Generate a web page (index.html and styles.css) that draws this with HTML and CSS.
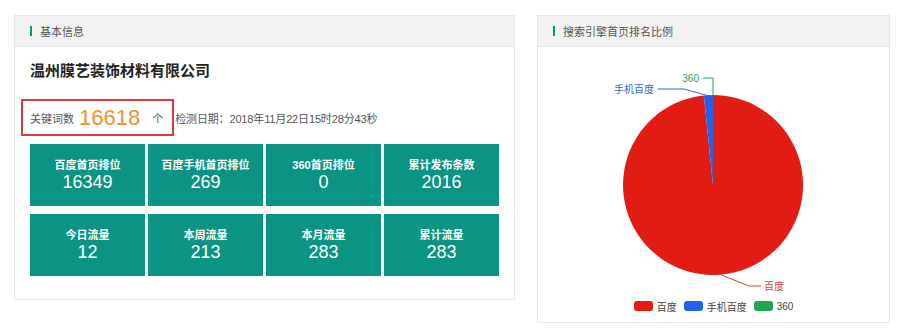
FILE: index.html
```html
<!DOCTYPE html>
<html lang="zh-CN">
<head>
  <meta charset="UTF-8">
  <title>基本信息</title>
  <link rel="stylesheet" href="styles.css">
</head>
<body>
<div class="page">

  <!-- 基本信息 -->
  <div class="panel panel-info">
    <div class="panel-head"><span class="bar"></span>基本信息</div>
    <div class="info-body">
      <h2 class="company">温州膜艺装饰材料有限公司</h2>
      <div class="stat-row">
        <div class="keyword-box">
          <span class="kw-label">关键词数</span>
          <span class="kw-num">16618</span>
          <span class="kw-unit">个</span>
        </div>
        <span class="check-date">检测日期：2018年11月22日15时28分43秒</span>
      </div>
      <div class="tiles">
        <div class="tile"><div class="tile-label">百度首页排位</div><div class="tile-value">16349</div></div>
        <div class="tile"><div class="tile-label">百度手机首页排位</div><div class="tile-value">269</div></div>
        <div class="tile"><div class="tile-label">360首页排位</div><div class="tile-value">0</div></div>
        <div class="tile"><div class="tile-label">累计发布条数</div><div class="tile-value">2016</div></div>
        <div class="tile"><div class="tile-label">今日流量</div><div class="tile-value">12</div></div>
        <div class="tile"><div class="tile-label">本周流量</div><div class="tile-value">213</div></div>
        <div class="tile"><div class="tile-label">本月流量</div><div class="tile-value">283</div></div>
        <div class="tile"><div class="tile-label">累计流量</div><div class="tile-value">283</div></div>
      </div>
    </div>
  </div>

  <!-- 搜索引擎首页排名比例 -->
  <div class="panel panel-chart">
    <div class="panel-head"><span class="bar"></span>搜索引擎首页排名比例</div>
    <div class="chart-body">
      <svg class="pie" width="351" height="250" viewBox="0 0 351 250">
        <path d="M175,138 L175,48 A90,90 0 1 1 165.86,48.47 Z" fill="#e01c15"/>
        <path d="M175,138 L165.86,48.47 A90,90 0 0 1 175,48 Z" fill="#2360ee"/>
        <!-- 标签线 -->
        <polyline points="171,49 146,42 120,42" fill="none" stroke="#2f64e0" stroke-width="1"/>
        <text x="116" y="46" text-anchor="end" class="lbl" fill="#2f64e0">手机百度</text>
        <polyline points="175,48 175,31 165,31" fill="none" stroke="#1fa650" stroke-width="1"/>
        <text x="161" y="35" text-anchor="end" class="lbl" fill="#1fa650">360</text>
        <polyline points="181,227 211,239 223,239" fill="none" stroke="#d6403a" stroke-width="1"/>
        <text x="226" y="243" class="lbl" fill="#d6403a">百度</text>
      </svg>
      <div class="legend">
        <span class="legend-item"><i class="sw sw-red"></i>百度</span>
        <span class="legend-item"><i class="sw sw-blue"></i>手机百度</span>
        <span class="legend-item"><i class="sw sw-green"></i>360</span>
      </div>
    </div>
  </div>

</div>
</body>
</html>
```

FILE: styles.css
```css
body {
  margin: 0;
  background-color: #ffffff;
  font-family: "Liberation Sans", "Noto Sans CJK SC", sans-serif;
  color: #333;
}

.page {
  display: flex;
  align-items: flex-start;
  gap: 22px;
  padding: 15px 10px 0 14px;
}

.panel {
  border: 1px solid #e6e6e6;
  background-color: #fff;
}

.panel-info {
  width: 500px;
}

.panel-chart {
  width: 351px;
}

.panel-head {
  display: flex;
  align-items: center;
  height: 30px;
  padding-left: 15px;
  background-color: #f2f2f2;
  border-bottom: 1px solid #e6e6e6;
  font-size: 11px;
  color: #555;
}

.panel-head .bar {
  width: 2px;
  height: 10px;
  background-color: #009688;
  margin-right: 8px;
}

.info-body {
  padding: 15px 15px 23px;
}

.company {
  margin: 0 0 19px;
  font-size: 15px;
  line-height: 18px;
  font-weight: bold;
  color: #222;
}

.stat-row {
  display: flex;
  align-items: center;
  margin-left: -9px;
  margin-bottom: 8px;
}

.keyword-box {
  display: flex;
  align-items: center;
  height: 33px;
  border: 2px solid #e0393a;
  padding: 0 9px 0 7px;
}

.kw-label {
  font-size: 11px;
  color: #555;
}

.kw-num {
  font-size: 22px;
  color: #f0922c;
  margin: 0 12px 0 5px;
}

.kw-unit {
  font-size: 11px;
  color: #555;
}

.check-date {
  font-size: 11px;
  letter-spacing: -0.15px;
  color: #555;
  margin-left: 1px;
}

.tiles {
  display: grid;
  grid-template-columns: repeat(4, 115px);
  column-gap: 3px;
  row-gap: 8px;
}

.tile {
  height: 62px;
  background-color: #0b9483;
  color: #fff;
  text-align: center;
  box-sizing: border-box;
  padding-top: 14px;
}

.tile-label {
  font-size: 11px;
  line-height: 14px;
  font-weight: bold;
}

.tile-value {
  font-size: 18px;
  line-height: 20px;
}

.chart-body {
  padding-bottom: 7px;
}

.pie {
  display: block;
}

.lbl {
  font-size: 10px;
  font-family: "Liberation Sans", "Noto Sans CJK SC", sans-serif;
}

.legend {
  display: flex;
  justify-content: center;
  align-items: center;
  gap: 7px;
  height: 18px;
  font-size: 10px;
  color: #444;
}

.legend-item {
  display: flex;
  align-items: center;
}

.sw {
  display: inline-block;
  width: 19px;
  height: 10px;
  border-radius: 3px;
  margin-right: 4px;
}

.sw-red { background-color: #e01c15; }
.sw-blue { background-color: #2360ee; }
.sw-green { background-color: #1fa650; }
```
